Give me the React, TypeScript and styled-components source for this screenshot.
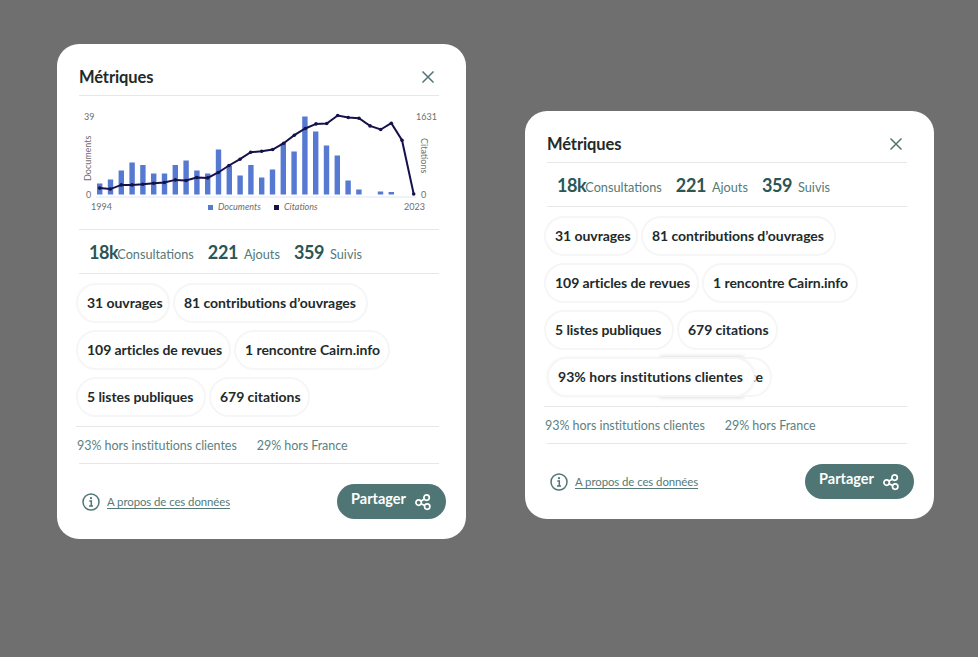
import React from 'react';
import styled, { createGlobalStyle } from 'styled-components';

const GlobalStyle = createGlobalStyle`
  html, body {
    margin: 0;
    height: 100%;
    background: #6f6f6f;
    font-family: "Lato", "Open Sans", sans-serif;
  }
`;

const Page = styled.div`
  display: flex;
  align-items: flex-start;
  gap: 59px;
  padding: 44px 0 0 57px;
  height: 657px;
  box-sizing: border-box;
`;

const Card = styled.section<{ $offset?: number }>`
  width: 409px;
  box-sizing: border-box;
  margin-top: ${(p) => p.$offset || 0}px;
  padding: 0 27px 20px 22px;
  background: #fff;
  border-radius: 22px;
`;

const Header = styled.header`
  display: flex;
  align-items: center;
  justify-content: space-between;
  height: 52px;
  padding-top: 14px;
  box-sizing: border-box;
  border-bottom: 1px solid #e6e8e8;
`;

const Title = styled.h2`
  margin: 0;
  font-size: 16.5px;
  font-weight: 700;
  letter-spacing: -0.1px;
  color: #222a2a;
`;

const CloseButton = styled.button`
  display: flex;
  padding: 0;
  margin-right: 4px;
  border: none;
  background: none;
  color: #4f7674;
`;

const ChartBlock = styled.div`
  height: 133px;
  border-bottom: 1px solid #e6e8e8;
`;

const ChartSvg = styled.svg`
  display: block;
  font-family: "Lato", sans-serif;
`;

const Stats = styled.div`
  display: flex;
  align-items: center;
  height: 44px;
  padding-left: 10px;
  box-sizing: border-box;
  border-bottom: 1px solid #e6e8e8;
`;

const Stat = styled.div`
  display: flex;
  align-items: baseline;
  margin-right: 14px;
`;

const StatValue = styled.strong<{ $tight?: boolean }>`
  font-size: 18px;
  font-weight: 700;
  letter-spacing: -0.4px;
  color: #2c5654;
  margin-right: ${(p) => (p.$tight ? -1 : 6)}px;
`;

const StatLabel = styled.span`
  font-size: 12.7px;
  color: #557a78;
`;

const Pills = styled.div`
  display: flex;
  flex-direction: column;
  gap: 7px;
  margin-left: -3px;
  padding: 9px 0;
  border-bottom: 1px solid #e6e8e8;
`;

const PillRow = styled.div`
  display: flex;
  gap: 3px;
`;

const Pill = styled.span<{ $raised?: boolean; $width: number }>`
  display: flex;
  align-items: center;
  width: ${(p) => p.$width}px;
  height: 40px;
  box-sizing: border-box;
  padding: 0 0 2px 9px;
  border: 2px solid #f6f6f6;
  border-radius: 20px;
  background: #fff;
  font-size: 14px;
  font-weight: 700;
  letter-spacing: -0.05px;
  white-space: nowrap;
  overflow: hidden;
  color: #222a2a;
  ${(p) =>
    p.$raised
      ? `position: relative;
         z-index: 1;
         margin: 0 -106px 0 3px;
         overflow: visible;
         letter-spacing: 0.05px;
         box-shadow: 0 0 3px rgba(0, 0, 0, 0.05);
         &::before {
           content: "";
           position: absolute;
           top: -2px;
           bottom: -2px;
           left: 110px;
           right: 8px;
           z-index: -1;
           clip-path: inset(-7px 0);
           box-shadow: 0 0 5px rgba(0, 0, 0, 0.16);
         }`
      : ''}
`;

const BackPill = styled(Pill)`
  justify-content: flex-end;
  padding: 0 7px 2px 0;
`;

const Audience = styled.div`
  display: flex;
  gap: 20px;
  align-items: center;
  height: 36px;
  margin-left: -2px;
  font-size: 12.5px;
  letter-spacing: -0.05px;
  color: #5c8280;
`;

const AudienceBlock = styled.div`
  border-bottom: 1px solid #e6e8e8;
`;

const Footer = styled.footer`
  display: flex;
  align-items: center;
  justify-content: space-between;
  margin: 20px -7px 0 3px;
`;

const About = styled.a`
  display: flex;
  align-items: center;
  gap: 7px;
  font-size: 11.4px;
  letter-spacing: -0.07px;
  color: #557a78;
  text-decoration: underline;
  text-underline-offset: 2px;
  text-decoration-thickness: 1px;
`;

const InfoIcon = styled.svg`
  flex: none;
  color: #4f7674;
`;

const ShareButton = styled.button`
  display: flex;
  align-items: center;
  justify-content: center;
  gap: 8px;
  width: 109px;
  height: 35px;
  padding: 0;
  border: none;
  border-radius: 18px;
  background: #4f7674;
  color: #fff;
  font-family: inherit;
  font-size: 14.5px;
  font-weight: 700;
`;

const ShareLabel = styled.span`
  position: relative;
  top: -3px;
`;

const CloseIcon = () => (
  <svg width="14" height="14" viewBox="0 0 14 14" fill="none" stroke="currentColor" strokeWidth="1.5">
    <path d="M1.5 1.5l11 11M12.5 1.5l-11 11" />
  </svg>
);

const ShareIcon = () => (
  <svg width="18" height="18" viewBox="0 0 18 18" fill="none" stroke="currentColor" strokeWidth="1.7">
    <circle cx="4.6" cy="9.6" r="2.7" />
    <circle cx="12.6" cy="4.6" r="2.7" />
    <circle cx="13.2" cy="13.6" r="2.7" />
    <path d="M6.9 8.2l3.4-2.2M7.1 10.7l3.6 1.7" />
  </svg>
);

const Info = () => (
  <InfoIcon width="18" height="18" viewBox="0 0 18 18" fill="none" stroke="currentColor">
    <circle cx="9" cy="9" r="8" strokeWidth="1.5" />
    <circle cx="9" cy="5.2" r="1.1" fill="currentColor" stroke="none" />
    <path d="M7.3 8h2v5M7 13h4" strokeWidth="1.5" />
  </InfoIcon>
);

const BAR_STEP = 10.8;
const BASE_Y = 89.5;
const barHeights = [
  11, 15, 24, 32, 29.5, 21, 21, 29.5, 34, 24, 21, 45, 29, 19, 29.5, 17, 25, 51, 43, 78, 63, 49, 39, 14, 5, 0, 3, 2.5,
];
// line points, as [x, y] inside the chart
const linePoints = [
  [20.7, 83.1], [31.3, 84.1], [42.3, 79.9], [53, 79.9], [63.7, 79.2], [74.7, 78.2], [85.3, 77.5], [96.3, 74.9], [107, 75.5],
  [117.7, 72.5], [128.7, 72.9], [139.3, 67.5], [150, 60.5], [161, 54.2], [171.7, 47.2], [182.7, 46.2], [193.7, 44.5],
  [204.7, 38.2], [215.3, 30.2], [226.3, 23.5], [237, 18.9], [247.7, 18.5], [258.7, 10.5], [269.3, 12.5], [280, 13.2],
  [291, 20.9], [301.7, 24.5], [312.3, 18.2], [323, 35.2], [334.7, 89],
];

const Chart = () => {
  const label = { fontSize: 9, fill: '#6e6e6e' };
  return (
    <ChartSvg width="360" height="132" viewBox="0 11 360 132" preserveAspectRatio="xMinYMin">
      <g transform="translate(0 20)">
        <line x1="17" x2="337" y1={BASE_Y + 2.5} y2={BASE_Y + 2.5} stroke="#dfe6f3" />
        {barHeights.map((h, i) => (
          <rect key={i} x={18 + i * BAR_STEP} y={BASE_Y - h} width="5.4" height={h} fill="#5679d2" />
        ))}
        <polyline
          points={linePoints.map((p) => p.join(',')).join(' ')}
          fill="none"
          stroke="#15124a"
          strokeWidth="2"
        />
        {linePoints.map((p, i) => (
          <circle key={i} cx={p[0]} cy={p[1]} r="1.8" fill="#15124a" />
        ))}
        <text x="5" y="15" {...label}>39</text>
        <text x="7" y="93" {...label}>0</text>
        <text x="337" y="15" {...label}>1631</text>
        <text x="342" y="93" {...label}>0</text>
        <text x="12" y="105" {...label}>1994</text>
        <text x="325" y="105" {...label}>2023</text>
        <text transform="translate(12 76) rotate(-90)" {...label}>Documents</text>
        <text transform="translate(342 33) rotate(90)" {...label}>Citations</text>
        <rect x="129" y="100" width="5" height="5" fill="#5679d2" />
        <text x="139" y="105" {...label} fontStyle="italic">Documents</text>
        <rect x="195" y="100" width="5" height="5" fill="#15124a" />
        <text x="205" y="105" {...label} fontStyle="italic">Citations</text>
      </g>
    </ChartSvg>
  );
};

const pillRows = [
  [{ text: '31 ouvrages', width: 94 }, { text: '81 contributions d’ouvrages', width: 195 }],
  [{ text: '109 articles de revues', width: 155 }, { text: '1 rencontre Cairn.info', width: 156 }],
  [{ text: '5 listes publiques', width: 130 }, { text: '679 citations', width: 101 }],
];

const Metrics: React.FC<{ withChart?: boolean; offset?: number; dragging?: boolean }> = ({ withChart, offset, dragging }) => (
  <Card $offset={offset}>
    <Header>
      <Title>Métriques</Title>
      <CloseButton><CloseIcon /></CloseButton>
    </Header>
    {withChart && (
      <ChartBlock>
        <Chart />
      </ChartBlock>
    )}
    <Stats>
      <Stat><StatValue $tight>18k</StatValue><StatLabel>Consultations</StatLabel></Stat>
      <Stat><StatValue>221</StatValue><StatLabel>Ajouts</StatLabel></Stat>
      <Stat><StatValue>359</StatValue><StatLabel>Suivis</StatLabel></Stat>
    </Stats>
    <Pills>
      {pillRows.map((row) => (
        <PillRow key={row[0].text}>
          {row.map((pill) => (
            <Pill key={pill.text} $width={pill.width}>{pill.text}</Pill>
          ))}
        </PillRow>
      ))}
      {dragging && (
        <PillRow>
          <Pill $raised $width={208}>93% hors institutions clientes</Pill>
          <BackPill $width={120}>29% hors France</BackPill>
        </PillRow>
      )}
    </Pills>
    <AudienceBlock>
      <Audience>
        <span>93% hors institutions clientes</span>
        <span>29% hors France</span>
      </Audience>
    </AudienceBlock>
    <Footer>
      <About><Info />A propos de ces données</About>
      <ShareButton>
        <ShareLabel>Partager</ShareLabel>
        <ShareIcon />
      </ShareButton>
    </Footer>
  </Card>
);

export default function App() {
  return (
    <Page>
      <GlobalStyle />
      <Metrics withChart />
      <Metrics offset={67} dragging />
    </Page>
  );
}
